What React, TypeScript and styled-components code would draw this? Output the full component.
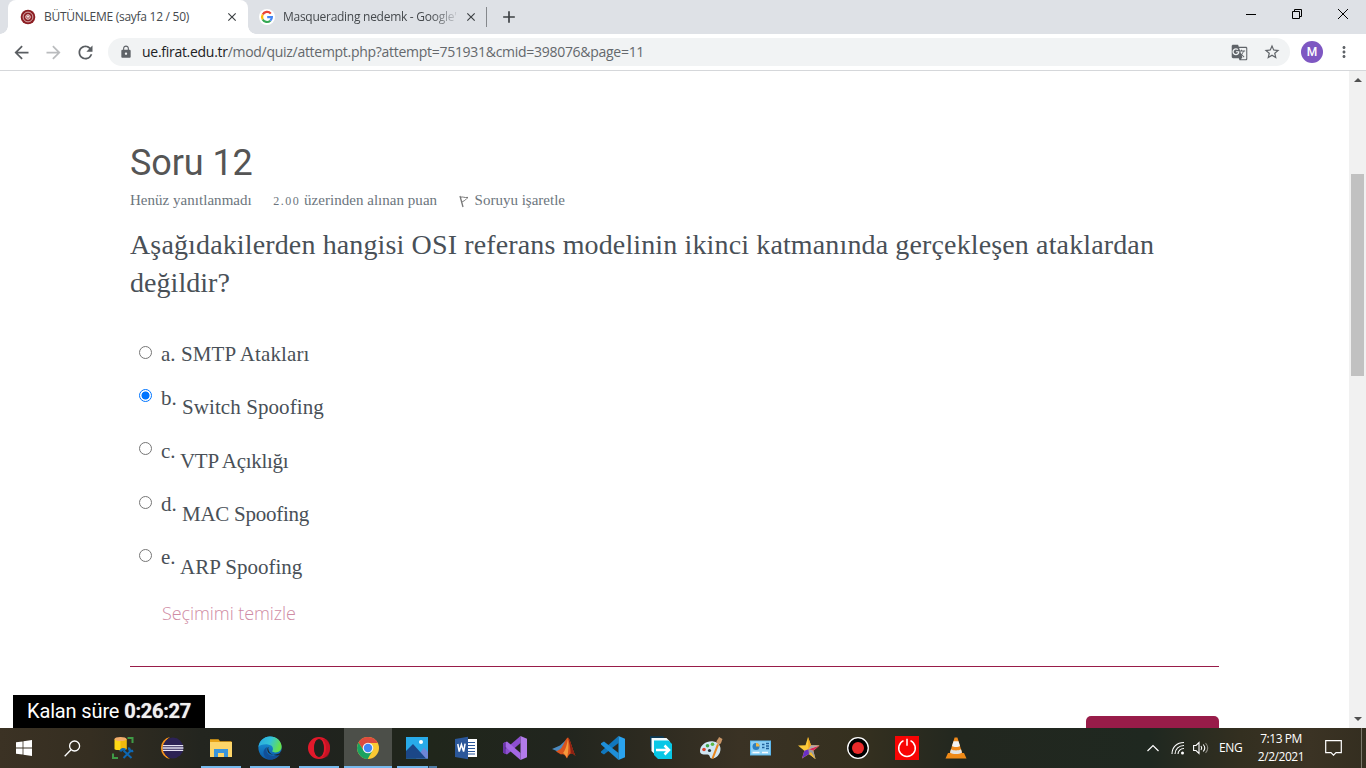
import React from 'react';
import styled, { createGlobalStyle } from 'styled-components';
import {
  MdAdd, MdArrowBack, MdArrowForward, MdClose, MdGTranslate, MdLock, MdMoreVert, MdRefresh, MdStarBorder,
} from 'react-icons/md';

const GlobalStyle = createGlobalStyle`
  * { box-sizing: border-box; }
  html, body { margin: 0; padding: 0; overflow: hidden; background: #fff; }
`;

const serif = "'Liberation Serif', serif";
const ui = "'Open Sans', 'Noto Sans', sans-serif";

const Screen = styled.div`
  width: 1366px;
  height: 768px;
  display: flex;
  flex-direction: column;
  overflow: hidden;
  background: #fff;
  font-family: ${ui};
`;

/* ---------- browser chrome ---------- */

const TabStrip = styled.div`
  height: 34px;
  flex: none;
  display: flex;
  align-items: center;
  padding-left: 8px;
  background: #dee1e6;
`;

const Tab = styled.div<{ $active?: boolean }>`
  position: relative;
  display: flex;
  align-items: center;
  width: ${(p) => (p.$active ? 240 : 239)}px;
  height: 34px;
  padding: 0 9px 0 ${(p) => (p.$active ? 12 : 11)}px;
  border-radius: 8px 8px 0 0;
  background: ${(p) => (p.$active ? '#fff' : 'transparent')};
  color: #45494d;
  font-size: 12px;

  ${(p) => p.$active && `
    &::before, &::after {
      content: '';
      position: absolute;
      bottom: 0;
      width: 8px;
      height: 8px;
    }
    &::before { left: -8px; background: radial-gradient(circle at 0 0, transparent 7.5px, #fff 8px); }
    &::after { right: -8px; background: radial-gradient(circle at 100% 0, transparent 7.5px, #fff 8px); }
  `}
`;

const TabTitle = styled.span<{ $fade?: boolean }>`
  flex: 1;
  margin-left: 8px;
  overflow: hidden;
  white-space: nowrap;
  line-height: 20px;
  letter-spacing: -0.27px;
  ${(p) => p.$fade && 'mask-image: linear-gradient(90deg, #000 148px, transparent 178px);'}
`;

const TabDivider = styled.span`
  width: 1px;
  height: 20px;
  margin-left: -1px;
  background: #85888c;
`;

const NewTab = styled.span`
  display: flex;
  margin-left: 12px;
  color: #3c4043;
`;

const WindowButtons = styled.div`
  display: flex;
  align-items: center;
  align-self: flex-start;
  height: 28px;
  margin-left: auto;
`;

const WindowButton = styled.span`
  width: 46px;
  display: flex;
  justify-content: center;
`;

const Toolbar = styled.div`
  height: 37px;
  flex: none;
  display: flex;
  align-items: center;
  padding: 0 13px 0 11px;
  border-bottom: 1px solid #d5d7da;
  background: #fff;
  color: #5f6368;
`;

const NavButton = styled.span<{ $dim?: boolean }>`
  display: flex;
  width: 21px;
  margin-right: 11px;
  color: ${(p) => (p.$dim ? '#babcbe' : '#5a5e62')};
`;

const AddressBar = styled.div`
  flex: 1;
  height: 28px;
  display: flex;
  align-items: center;
  margin-left: 1px;
  padding: 0 9px 0 11px;
  border-radius: 14px;
  background: #f1f3f4;
`;

const Url = styled.span`
  flex: 1;
  margin-left: 9px;
  font-size: 14px;
  line-height: 20px;
  letter-spacing: -0.285px;
  white-space: nowrap;
  color: #64686c;
  b { font-weight: 400; color: #202124; }
`;

const BarIcon = styled.span`
  display: flex;
  margin-left: 15px;
`;

const Avatar = styled.span`
  width: 22px;
  height: 22px;
  margin: 0 12px 0 11px;
  border-radius: 50%;
  background: #7e57c2;
  color: #fff;
  font: 500 12px/22px Roboto, sans-serif;
  text-align: center;
`;

/* ---------- page ---------- */

const Viewport = styled.div`
  position: relative;
  height: 657px;
  flex: none;
  display: flex;
`;

const Page = styled.main`
  width: 1349px;
  height: 657px;
  padding: 70px 130px 0 130px;
  overflow: hidden;
`;

const Title = styled.h3`
  margin: 0;
  color: #555;
  font: 400 36px/44px Roboto, sans-serif;
  letter-spacing: -0.1px;
`;

const Meta = styled.div`
  display: flex;
  height: 25px;
  margin-top: 2px;
  color: #6c757d;
  font: 400 15px/26px ${serif};
`;

const MetaItem = styled.span`
  margin-right: 21.5px;
  letter-spacing: 0.03px;
  white-space: nowrap;
`;

const OldStyle = styled.span`
  font-size: 12px;
  letter-spacing: 1.5px;
`;

const FlagLink = styled.span`
  display: flex;
  white-space: nowrap;
  svg { margin: 8px 6px 0 0; }
`;

const Question = styled.p`
  margin: 14px 0 0;
  color: #495057;
  font: 400 28px/38px ${serif};
`;

const Line = styled.span<{ $spacing: number }>`
  display: table;
  white-space: nowrap;
  letter-spacing: ${(p) => p.$spacing}px;
`;

const Options = styled.div`
  margin: 37px 0 0 9px;
  color: #495057;
  font: 400 21px/30px ${serif};
`;

const Option = styled.label<{ $h: number }>`
  display: flex;
  height: ${(p) => p.$h}px;
`;

const Radio = styled.span<{ $on?: boolean; $top: number }>`
  width: 13px;
  height: 13px;
  flex: none;
  margin: ${(p) => p.$top}px 9px 0 0;
  border: 1px solid ${(p) => (p.$on ? '#0075ff' : '#767676')};
  border-radius: 50%;
  background: ${(p) => (p.$on ? 'radial-gradient(circle, #0075ff 3.6px, #fff 4.4px)' : '#fff')};
`;

const Letter = styled.span<{ $w: number }>`
  width: ${(p) => p.$w}px;
`;

const Answer = styled.span<{ $drop: number; $spacing: number }>`
  height: 30px;
  margin-top: ${(p) => p.$drop}px;
  letter-spacing: ${(p) => p.$spacing}px;
`;

const ClearChoice = styled.a`
  display: table;
  margin: 3px 0 0 32px;
  color: #cf8ba4;
  font: 300 18px/28px ${ui};
  letter-spacing: -0.08px;
`;

const Rule = styled.hr`
  height: 1px;
  margin: 39px 0 0;
  border: 0;
  background: #981c49;
`;

const NextButton = styled.div`
  width: 133px;
  height: 40px;
  margin: 49px 0 0 auto;
  border-radius: 5px;
  background: #981c49;
`;

const Timer = styled.div`
  position: absolute;
  left: 13px;
  bottom: 0;
  width: 192px;
  height: 33px;
  padding-left: 14px;
  background: #000;
  color: #fff;
  font: 400 20px/33px Roboto, sans-serif;
  letter-spacing: -0.14px;
  white-space: nowrap;
  b { letter-spacing: -0.25px; color: #f0f0f0; text-shadow: 0 0 1px #ccc; }
`;

const Scrollbar = styled.div`
  width: 17px;
  display: flex;
  flex-direction: column;
  align-items: center;
  background: #f1f1f1;
`;

const ScrollArrow = styled.span<{ $down?: boolean }>`
  width: 0;
  height: 0;
  margin: ${(p) => (p.$down ? 'auto 0 7px' : '7px 0 0')};
  border: 4px solid transparent;
  ${(p) => (p.$down ? 'border-top-color: #505050; border-bottom-width: 0;' : 'border-bottom-color: #505050; border-top-width: 0;')}
`;

const Thumb = styled.span`
  width: 13px;
  height: 202px;
  margin-top: 92px;
  background: #c1c1c1;
`;

/* ---------- taskbar ---------- */

const Taskbar = styled.div`
  height: 40px;
  flex: none;
  display: flex;
  background: linear-gradient(90deg, #3b3224 0, #352e21 90px, #23251f 200px, #20231e 320px, #20261b 430px, #21251e 560px,
    #2c2a20 640px, #3a3224 740px, #35301f 860px, #22271f 960px, #1f2820 1150px, #332f20 1240px, #3b3324 1310px, #342e20 1366px);
`;

const TaskButton = styled.span<{ $state?: 'open' | 'active' | 'stack'; $gap?: number }>`
  width: 48px;
  height: 40px;
  flex: none;
  display: flex;
  align-items: center;
  justify-content: center;
  margin-right: ${(p) => p.$gap ?? 1}px;
  background-color: ${(p) => (p.$state === 'active' ? '#4c4f49' : 'transparent')};
  background-repeat: no-repeat;
  background-position: center bottom;
  background-size: ${(p) => (p.$state === 'active' ? '48px 2px' : '40px 2px')};
  background-image: ${(p) =>
    !p.$state ? 'none'
      : p.$state === 'stack' ? 'linear-gradient(90deg, #76b9ed 31px, #2b3c4c 31px, #2b3c4c 32px, #4f7da6 32px)'
      : 'linear-gradient(#76b9ed, #76b9ed)'};
`;

const Tray = styled.div`
  display: flex;
  align-items: center;
  margin-left: auto;
  color: #fff;
  font: 400 12px/18px ${ui};
`;

const Lang = styled.span`
  width: 25px;
  margin-left: 9px;
  letter-spacing: -0.4px;
`;

const Clock = styled.span`
  width: 60px;
  margin: 0 1px 1px 7px;
  text-align: center;
  white-space: nowrap;
  letter-spacing: -0.45px;
  div { display: table; margin: 0 auto; }
`;

const TrayIcon = styled.span<{ $ml: number }>`
  display: flex;
  margin-left: ${(p) => p.$ml}px;
`;

const ShowDesktop = styled.span`
  width: 5px;
  height: 40px;
  margin-left: 19px;
  border-left: 1px solid #7b776b;
`;

/* ---------- drawings ---------- */

const I: React.FC<{ children: React.ReactNode }> = ({ children }) => (
  <svg width="24" height="24" viewBox="0 0 24 24">{children}</svg>
);

const Crest = () => (
  <svg width="16" height="16" viewBox="0 0 16 16">
    <circle cx="8" cy="8" r="7.3" fill="#8c1d22" />
    <circle cx="8" cy="8" r="4.900" fill="none" stroke="#dfbcbd" strokeWidth="0.9" />
    <circle cx="8" cy="8" r="2.300" fill="#a8474b" stroke="#f3e3e3" strokeWidth="0.9" />
    <path d="M8 6.500v2.600M6.800 7.600h2.400" stroke="#fff" strokeWidth="0.8" />
  </svg>
);

const GoogleG = () => (
  <svg width="16" height="16" viewBox="0 0 16 16">
    <circle cx="8" cy="8" r="8" fill="#fff" />
    <g fill="none" strokeWidth="2.2">
      <path d="M11.8 4.6A4.9 4.9 0 0 0 3.7 5.6" stroke="#ea4335" />
      <path d="M3.7 5.6a5 5 0 0 0 0 4.8" stroke="#fbbc05" />
      <path d="M3.7 10.4a4.9 4.9 0 0 0 7.6 1.3" stroke="#34a853" />
      <path d="M11.3 11.7A4.7 4.7 0 0 0 12.9 8.1H8.2" stroke="#4285f4" />
    </g>
  </svg>
);

const Flag = () => (
  <svg width="10" height="13" viewBox="0 0 10 13" fill="none" stroke="#777" strokeWidth="1">
    <path d="M1 1l3 11" strokeWidth="1.3" />
    <path d="M1.8 2.2C4 1.4 5 3 9 2.4 7 4 6.500 5.500 3.200 6.800" />
  </svg>
);

const Start = () => (
  <svg width="16" height="16" viewBox="0 0 16 16" fill="#fff">
    <path d="M0 2.300L6.600 1.400V7.600H0zM7.400 1.300L16 0V7.600H7.400zM0 8.400H6.600V14.600L0 13.700zM7.400 8.400H16V16L7.400 14.700z" />
  </svg>
);

const Search = () => (
  <svg width="17" height="17" viewBox="0 0 17 17" fill="none" stroke="#fff" strokeWidth="1.3">
    <circle cx="10.600" cy="6" r="5" />
    <path d="M7 9.800L.7 16.200" />
  </svg>
);

const SqlTools = () => (
  <I>
    <path d="M16.500 2h5v5M2 17.500v4.500h5" fill="none" stroke="#3f9b46" strokeWidth="2" />
    <path d="M3.500 3v10c0 1.600 12 1.600 12 0V3z" fill="#fdd816" />
    <path d="M9.500 3v11.200c3.300 0 6-.4 6-1.200V3z" fill="#f2b90d" />
    <ellipse cx="9.500" cy="3" rx="6" ry="2" fill="#f3ad6b" />
    <path d="M12.500 14.500l8 7.500M20 14.500L12.500 22" stroke="#0e67b3" strokeWidth="2" />
    <path d="M9.500 15.500c.8-2.500 3-3 5-1.500M18.200 11.500c-.5 2.500 1.500 4 4 3.300" fill="none" stroke="#0e67b3" strokeWidth="2.400" />
  </I>
);

const Eclipse = () => (
  <I>
    <path d="M10 1A11.200 11.200 0 0 0 10 23 13 13 0 0 1 10 1" fill="#f7941e" />
    <circle cx="13" cy="12" r="10.400" fill="#2c2255" />
    <path d="M3 9.600h20.200M2.600 12h20.800M3 14.400h20.200" stroke="#e6e3f3" strokeWidth="1.400" />
  </I>
);

const Explorer = () => (
  <I>
    <path d="M1 3.200h8.500l1.500 2h11.500V20H1z" fill="#e8a317" />
    <path d="M1 6h22v15H1z" fill="#fdd569" />
    <path d="M5 21v-8h14v8h-4v-4H9v4z" fill="#3a95dc" />
  </I>
);

const Edge = () => (
  <I>
    <defs>
      <linearGradient id="eg" x1="0" y1="0" x2="1" y2=".3"><stop offset="0" stopColor="#2aa7e0" /><stop offset=".55" stopColor="#33c3d8" /><stop offset="1" stopColor="#66e04d" /></linearGradient>
      <linearGradient id="eb" x1="0" y1="0" x2="0" y2="1"><stop offset="0" stopColor="#1b9de2" /><stop offset="1" stopColor="#0c59a4" /></linearGradient>
    </defs>
    <circle cx="12" cy="12" r="11.600" fill="url(#eb)" />
    <path d="M.5 11C1.200 4.700 6.300.4 12 .4c7 0 11.600 4.900 11.600 10.300 0 3.300-2.600 5.700-5.800 5.700-2.400 0-4.200-.8-3.300-2 .9-1.200.9-5.400-4.600-6C5.300 8 1.600 9 .5 11z" fill="url(#eg)" />
    <path d="M9.200 11c-2.600 6.500 2.800 9.500 7.600 9 2.300-.3 4.400-1.300 5.400-1.800-2 3-5.700 5.400-10.200 5.400C6 23 2.500 14.500 9.200 11z" fill="#124f97" />
    <path d="M10.500 10.500c-1.700 1.700-1.500 5.200 1 7 3.300 2.200 8.500 1 10.800-.4.800-.3.700 1-.1 1.600-3.500 1.400-7.400.5-9.500-1.200-2-1.800-3-4.700-2.200-7z" fill="#20242a" />
    <path d="M22.500 15.500l1.500 0-1.200 3.200-1.500-.4z" fill="#20242a" />
  </I>
);

const Opera = () => (
  <I>
    <path fillRule="evenodd" d="M12 1a11 11 0 1 0 0 22 11 11 0 0 0 0-22zM12 3.200c3 0 4.800 4 4.800 8.800s-1.800 8.800-4.800 8.800S7.200 16.800 7.200 12 9 3.200 12 3.200z" fill="#e3192b" />
    <path d="M9 3.600C13 .5 19 3 19 12s-6 11.500-10 8.400c1.500 1 3.500.9 5 .1C21 24 23 18 23 12S20 .8 14 3.500c-1.600-.8-3.600-.9-5 .1z" fill="#b40f20" opacity=".6" />
    <path d="M12 3.200c3 0 4.800 4 4.800 8.800s-1.800 8.800-4.800 8.800S7.200 16.800 7.200 12 9 3.200 12 3.200z" fill="#20231e" />
  </I>
);

const Chrome = () => (
  <I>
    <circle cx="12" cy="12" r="11" fill="#fbc933" />
    <path d="M12 7h9.800A11 11 0 0 0 2.500 6.500L7.600 14.500z" fill="#dd4b3e" />
    <path d="M2.500 6.500A11 11 0 0 0 11.700 23l4.700-8.300L7.600 14.500z" fill="#1aa260" />
    <circle cx="12" cy="12" r="5.300" fill="#f4f4f4" />
    <circle cx="12" cy="12" r="4.200" fill="#4286f5" />
  </I>
);

const Photos = () => (
  <I>
    <path d="M1 1h22v21.500H1z" fill="#28abe9" />
    <path d="M11 22.500l8-11 4 4.500v6.500z" fill="#6d86d6" />
    <path d="M1 15l7-7 13 14.500H1z" fill="#1b4787" />
    <circle cx="16" cy="6" r="2" fill="#fff" />
  </I>
);

const Word = () => (
  <I>
    <path d="M12 3h11v18H12z" fill="#fff" />
    <path d="M14 6.500h7M14 9.500h7M14 12.500h7M14 15.500h7M14 18h7" stroke="#2b579a" strokeWidth="1.200" />
    <path d="M1 3l13-2.300v22.600L1 21z" fill="#2b579a" />
    <path d="M3.800 8l1.400 7.500 2.200-7 2.200 7 1.500-7.800" fill="none" stroke="#fff" strokeWidth="1.500" />
  </I>
);

const VisualStudio = () => (
  <I>
    <path d="M17.500 0v7L4 18.500 0 16.800V15z" fill="#8d4fd0" />
    <path d="M17.500 24v-7L4 5.500 0 7.200V9z" fill="#a468e4" />
    <path d="M0 7.200L2.800 6v12L0 16.800z" fill="#6a35a8" />
    <path d="M17.500 0L24 2.800v18.400L17.500 24z" fill="#b27bea" />
  </I>
);

const Matlab = () => (
  <I>
    <path d="M0 13l8-3.500L14 4l-3 8-4 4z" fill="#4c8bc0" />
    <path d="M4 15.500l4.500-2.500C12 9 13.500 2 16 1.500c2 1 4 11 7.500 18.500-4-4-6-3-8.500 2.500-2-4-4-5-6-4z" fill="#d9541e" />
    <path d="M16 1.500c2 1 4 11 7.500 18.500-2-2-3.500-2.800-4.800-2C18.500 12 17.500 6 16 1.500z" fill="#8e2113" />
    <path d="M11 17c3-3 4-10 5-14 .8 6 .5 13-1 19-1.500-3-2.500-4-4-5z" fill="#f59a3c" />
  </I>
);

const VsCode = () => (
  <I>
    <path d="M17.500 0v7L3 18.500 0 16.800V15.500z" fill="#1177bd" />
    <path d="M17.500 24v-7L3 5.500 0 7.200V8.500z" fill="#1e8ed8" />
    <path d="M17.500 0L24 2.800v18.400L17.500 24z" fill="#2aa3ef" />
  </I>
);

const DownloadBox = () => (
  <I>
    <path d="M0 .3h13l3 3V14H3l-3-3z" fill="#0b3a57" />
    <path d="M1.500 2h15l3 3v13h-15l-3-3z" fill="#f4fbfd" />
    <path d="M4 4.500h14.500L22 8v15H8l-4-4z" fill="#08c7e6" />
    <path d="M6 14h12M14.500 9.500l4.500 4.500-4.500 4.500" fill="none" stroke="#fff" strokeWidth="2.500" />
  </I>
);

const Paint = () => (
  <I>
    <path d="M1 15C1 9 8 4.500 14.500 5.500S22.500 12 21 16c-1 3-4 6.500-8 6.500-3 0-1.500-4-4.500-4S1 19 1 15z" fill="#cfe6f4" />
    <circle cx="5" cy="13.500" r="1.800" fill="#d9442f" />
    <circle cx="8.500" cy="9.700" r="1.800" fill="#3fa64a" />
    <circle cx="13.500" cy="8.300" r="1.800" fill="#5bb846" />
    <circle cx="10.500" cy="14.500" r="1.600" fill="#26343c" />
    <path d="M12.500 22.500L18 8l2 .8-5.500 14z" fill="#e8861e" />
    <path d="M17.500 7c-.5-3 2-3.500 2.500-6l3.500 2c-1 2-1 4.500-3 5.500z" fill="#c99566" />
  </I>
);

const Panel = () => (
  <I>
    <path d="M2 4.500h21v15H2z" fill="#5db7ec" />
    <path d="M3 5.500h19v13H3z" fill="#8fd0f5" />
    <circle cx="8" cy="10.500" r="3.500" fill="#2e7fc0" />
    <path d="M8 10.500V7a3.500 3.500 0 0 1 3.500 3.500z" fill="#f4b740" />
    <path d="M14 8.500h2.500M14 11.500h2.500M18 7.500h3M18 10h3M18 12.500h3" stroke="#20609b" strokeWidth="1.300" />
    <path d="M4.500 16.500h7M14 16.500h6" stroke="#f7fbff" strokeWidth="1.300" />
  </I>
);

const Star = () => (
  <I>
    <path d="M11 1l3 8.200 8.500.3-6.200 5.300L18.500 23 12 18l-7 4.500 2.300-7.700L1 9.500 8.500 9.200z" fill="#fbc93a" />
    <path d="M11 1l3 8.200-2.500 4z" fill="#eea51e" />
    <path d="M11.500 13.200L22.500 9.500l-6.200 5.300z" fill="#d8295f" />
    <path d="M11.500 13.200l2.500-4 8.500.3z" fill="#b0a4b0" />
    <path d="M11.500 13.200l4.800 1.600L18.500 23 12 18z" fill="#9a98a6" />
    <path d="M12 18l6.500 5-4.500-7z" fill="#f6bd2a" />
    <path d="M11.500 13.200L12 18l-7 4.500 2.300-7.700z" fill="#6a30c9" />
  </I>
);

const Recorder = () => (
  <I>
    <circle cx="12" cy="12" r="10.300" fill="#000" stroke="#fff" strokeWidth="1.300" />
    <circle cx="12" cy="12" r="6" fill="#ea2a2a" />
  </I>
);

const Power = () => (
  <I>
    <path d="M0 0h24v24H0z" fill="#f80404" />
    <path d="M8.500 4.600a8.300 8.300 0 1 0 7 0M12 2.800v7" fill="none" stroke="#fff" strokeWidth="1.500" />
  </I>
);

const Vlc = () => (
  <I>
    <path d="M4 17h16l2.500 5.500h-21z" fill="#ef8a17" />
    <path d="M10.600 1.500h2.800L18.500 18c-2 2.300-11 2.300-13 0z" fill="#f08a1c" />
    <path d="M9.500 5.200h5L16 10c-2 1.300-6 1.300-8 0z" fill="#f3f3f3" />
    <path d="M7 13.200c2.500 1.600 7.500 1.600 10 0l1 3.200c-3 2-9 2-12 0z" fill="#e3e3e3" />
  </I>
);

const tasks: { icon: React.ReactNode; state?: 'open' | 'active' | 'stack' }[] = [
  { icon: <SqlTools /> },
  { icon: <Eclipse /> },
  { icon: <Explorer />, state: 'open' },
  { icon: <Edge />, state: 'open' },
  { icon: <Opera />, state: 'open' },
  { icon: <Chrome />, state: 'active' },
  { icon: <Photos />, state: 'stack' },
  { icon: <Word /> },
  { icon: <VisualStudio /> },
  { icon: <Matlab /> },
  { icon: <VsCode /> },
  { icon: <DownloadBox /> },
  { icon: <Paint /> },
  { icon: <Panel /> },
  { icon: <Star /> },
  { icon: <Recorder /> },
  { icon: <Power /> },
  { icon: <Vlc /> },
];

const options = [
  { letter: 'a.', text: 'SMTP Atakları', h: 44, w: 20, top: 7, drop: 0, spacing: 0.12 },
  { letter: 'b.', text: 'Switch Spoofing', on: true, h: 53, w: 21, top: 6, drop: 9, spacing: 0.08 },
  { letter: 'c.', text: 'VTP Açıklığı', h: 53, w: 19, top: 6, drop: 10, spacing: -0.3 },
  { letter: 'd.', text: 'MAC Spoofing', h: 53, w: 21, top: 7, drop: 10, spacing: -0.25 },
  { letter: 'e.', text: 'ARP Spoofing', h: 54, w: 19, top: 7, drop: 10, spacing: 0 },
];

export default function App() {
  return (
    <Screen>
      <GlobalStyle />
      <TabStrip>
        <Tab $active>
          <Crest />
          <TabTitle>BÜTÜNLEME (sayfa 12 / 50)</TabTitle>
          <MdClose size={14} color="#3c4043" />
        </Tab>
        <Tab>
          <GoogleG />
          <TabTitle $fade>Masquerading nedemk - Google'</TabTitle>
          <MdClose size={14} color="#3c4043" />
        </Tab>
        <TabDivider />
        <NewTab><MdAdd size={20} /></NewTab>
        <WindowButtons>
          <WindowButton><svg width="10" height="10"><path d="M0 5.500h10" stroke="#000" /></svg></WindowButton>
          <WindowButton><svg width="10" height="10" fill="none" stroke="#000"><path d="M.5 2.500h7v7h-7zM2.500 2.500v-2h7v7h-2" /></svg></WindowButton>
          <WindowButton><svg width="10" height="10"><path d="M0 0l10 10M10 0L0 10" stroke="#000" /></svg></WindowButton>
        </WindowButtons>
      </TabStrip>
      <Toolbar>
        <NavButton><MdArrowBack size={21} /></NavButton>
        <NavButton $dim><MdArrowForward size={21} /></NavButton>
        <NavButton><MdRefresh size={21} /></NavButton>
        <AddressBar>
          <MdLock size={14} />
          <Url><b>ue.firat.edu.tr</b>/mod/quiz/attempt.php?attempt=751931&amp;cmid=398076&amp;page=11</Url>
          <BarIcon><MdGTranslate size={17} /></BarIcon>
          <BarIcon><MdStarBorder size={18} /></BarIcon>
        </AddressBar>
        <Avatar>M</Avatar>
        <MdMoreVert size={18} />
      </Toolbar>
      <Viewport>
        <Page>
          <Title>Soru 12</Title>
          <Meta>
            <MetaItem>Henüz yanıtlanmadı</MetaItem>
            <MetaItem><OldStyle>2.00</OldStyle> üzerinden alınan puan</MetaItem>
            <FlagLink><Flag />Soruyu işaretle</FlagLink>
          </Meta>
          <Question>
            <Line $spacing={0.135}>Aşağıdakilerden hangisi OSI referans modelinin ikinci katmanında gerçekleşen ataklardan</Line>
            <Line $spacing={0.05}>değildir?</Line>
          </Question>
          <Options>
            {options.map((o) => (
              <Option key={o.letter} $h={o.h}>
                <Radio $on={o.on} $top={o.top} />
                <Letter $w={o.w}>{o.letter}</Letter>
                <Answer $drop={o.drop} $spacing={o.spacing}>{o.text}</Answer>
              </Option>
            ))}
          </Options>
          <ClearChoice>Seçimimi temizle</ClearChoice>
          <Rule />
          <NextButton />
        </Page>
        <Scrollbar>
          <ScrollArrow />
          <Thumb />
          <ScrollArrow $down />
        </Scrollbar>
        <Timer>Kalan süre <b>0:26:27</b></Timer>
      </Viewport>
      <Taskbar>
        <TaskButton $gap={0}><Start /></TaskButton>
        <TaskButton $gap={3}><Search /></TaskButton>
        {tasks.map((t, i) => <TaskButton key={i} $state={t.state}>{t.icon}</TaskButton>)}
        <Tray>
          <TrayIcon $ml={0}><svg width="12" height="8" fill="none" stroke="#fff" strokeWidth="1.200"><path d="M.5 7L6 1.500 11.500 7" /></svg></TrayIcon>
          <TrayIcon $ml={12}>
            <svg width="14" height="14" viewBox="0 0 14 14" fill="none" stroke="#fff" strokeWidth="1.100">
              <path d="M1 13C1 6 6 1.500 13 1.500M4 13c0-5 4-8.500 9-8.500M7 13c0-3 2.500-5.500 6-5.500" />
              <circle cx="11.500" cy="12" r="1.500" fill="#fff" stroke="none" />
            </svg>
          </TrayIcon>
          <TrayIcon $ml={8}>
            <svg width="17" height="14" viewBox="0 0 17 14" fill="none" stroke="#fff" strokeWidth="1.100">
              <path d="M.6 4.500H3L6 1.500v11L3 9.500H.6zM8 5c.9 1.200.9 2.800 0 4M10.200 3.500c1.800 2 1.800 5 0 7" />
              <path d="M12.500 2c2.700 3 2.700 7 0 10" stroke="#8c8a82" />
            </svg>
          </TrayIcon>
          <Lang>ENG</Lang>
          <Clock><div>7:13 PM</div><div>2/2/2021</div></Clock>
          <TrayIcon $ml={13}>
            <svg width="17" height="16" fill="none" stroke="#fff" strokeWidth="1.200"><path d="M.7.7h15.600v12H11l-2.500 2.500L6 12.700H.7z" /></svg>
          </TrayIcon>
          <ShowDesktop />
        </Tray>
      </Taskbar>
    </Screen>
  );
}
